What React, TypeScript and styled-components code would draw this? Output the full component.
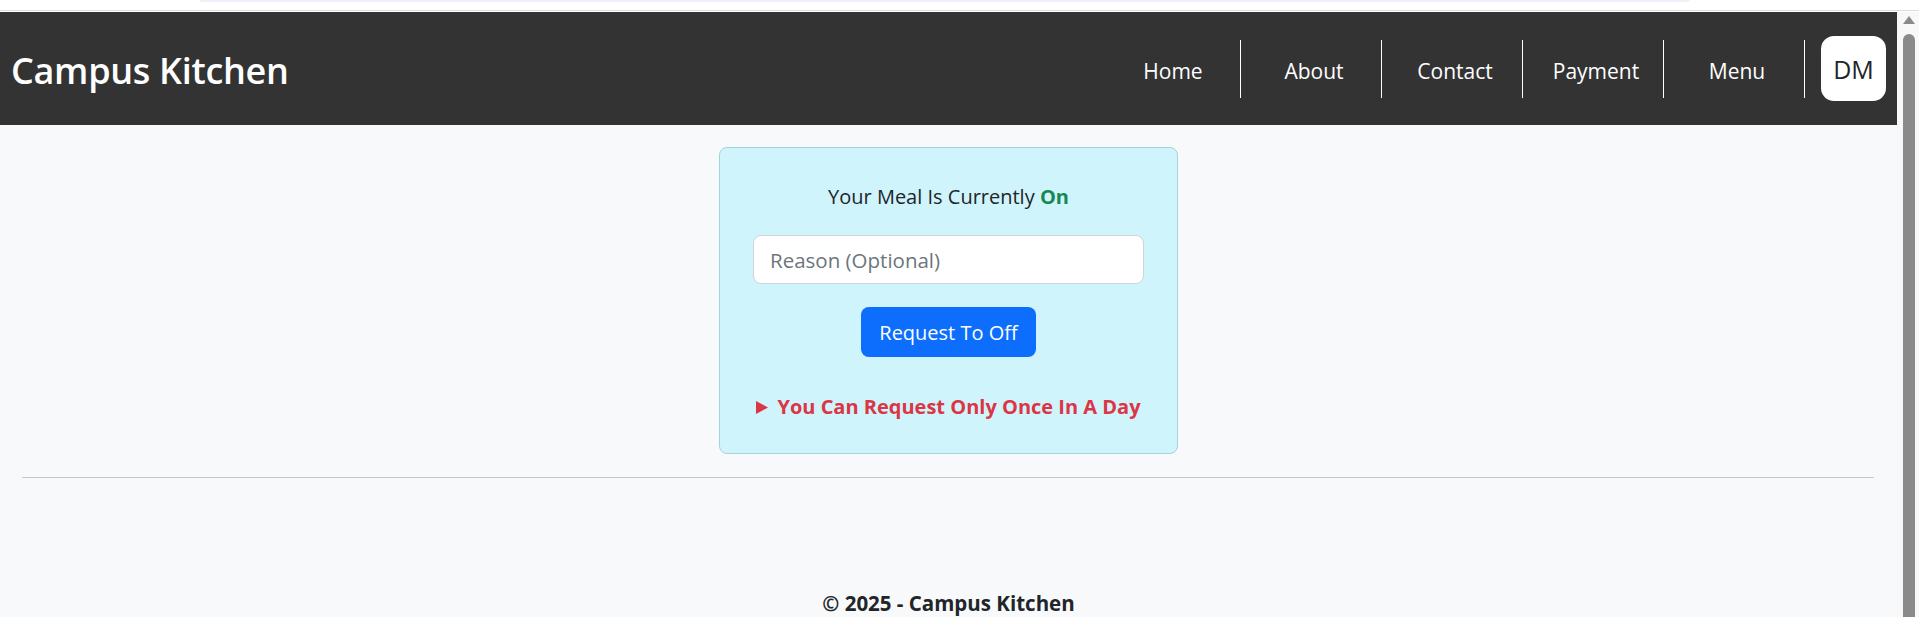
import React, { useState } from "react";
import styled, { createGlobalStyle } from "styled-components";

const GlobalStyle = createGlobalStyle`
  html, body {
    margin: 0;
    padding: 0;
    background: #ffffff;
    overflow: hidden;
  }
  body {
    font-family: "Open Sans", "Noto Sans", Arial, sans-serif;
    color: #212529;
  }
  * {
    box-sizing: border-box;
  }
`;

const Frame = styled.div`
  display: flex;
  flex-direction: column;
  width: 1919px;
  height: 617px;
  overflow: hidden;
`;

const TopStrip = styled.div`
  height: 12px;
  flex-shrink: 0;
  background: #ffffff;
  border-bottom: 1px solid #ffffff;
  display: flex;
  flex-direction: column;
`;

const TabHint = styled.div`
  height: 2px;
  margin-left: 200px;
  width: 1490px;
  background: #edf2fa;
  border-radius: 0 0 4px 4px;
`;

const TopRule = styled.div`
  margin-top: auto;
  height: 1px;
  background: #dcdcdc;
`;

const Viewport = styled.div`
  flex: 1;
  display: flex;
  min-height: 0;
`;

const Page = styled.div`
  flex: 1;
  display: flex;
  flex-direction: column;
  background: #f8f9fa;
  overflow: hidden;
`;

const ScrollTrack = styled.div`
  width: 22px;
  flex-shrink: 0;
  background: #f8f8f8;
  display: flex;
  flex-direction: column;
  align-items: center;
  padding: 4px 2px 0 4px;
  gap: 10px;
`;

const ScrollArrow = styled.div`
  width: 0;
  height: 0;
  border-left: 6px solid transparent;
  border-right: 6px solid transparent;
  border-bottom: 8px solid #8a8a8a;
`;

const ScrollThumb = styled.div`
  flex: 1;
  width: 12px;
  background: #8a8a8a;
  border-radius: 6px 6px 0 0;
`;

const Navbar = styled.nav`
  height: 113px;
  flex-shrink: 0;
  background: #333333;
  display: flex;
  align-items: center;
  justify-content: space-between;
  padding: 0 11px 0 11px;
`;

const Brand = styled.a`
  color: #ffffff;
  font-size: 36px;
  font-weight: 600;
  text-decoration: none;
  letter-spacing: -0.3px;
  padding-top: 3px;
  cursor: pointer;
`;

const NavList = styled.div`
  display: flex;
  align-items: center;
`;

const NavLink = styled.a`
  width: 141px;
  height: 58px;
  display: flex;
  align-items: center;
  justify-content: center;
  padding: 4px 0 0 6px;
  color: #ffffff;
  font-size: 21px;
  text-decoration: none;
  border-right: 1px solid #ffffff;
  cursor: pointer;
`;

const Avatar = styled.div`
  width: 65px;
  height: 65px;
  margin-left: 16px;
  border-radius: 13px;
  background: #ffffff;
  color: #212529;
  font-size: 25px;
  display: flex;
  align-items: center;
  justify-content: center;
`;

const Main = styled.main`
  display: flex;
  flex-direction: column;
  align-items: center;
  padding-top: 22px;
`;

const StatusCard = styled.div`
  width: 459px;
  background: #cff4fc;
  border: 1px solid #a3d3dd;
  border-radius: 8px;
  padding: 34px 33px 31px;
  display: flex;
  flex-direction: column;
  align-items: center;
`;

const StatusText = styled.div`
  font-size: 20px;
  line-height: 30px;
  margin-bottom: 23px;
`;

const StatusValue = styled.b<{ $on: boolean }>`
  font-weight: 700;
  color: ${(p) => (p.$on ? "#198754" : "#dc3545")};
`;

const ReasonInput = styled.input`
  width: 100%;
  height: 49px;
  padding: 0 16px;
  font-family: inherit;
  font-size: 20.5px;
  color: #212529;
  background: #ffffff;
  border: 1px solid #ced4da;
  border-radius: 8px;
  margin-bottom: 23px;
  outline: none;
  &::placeholder {
    color: #6c757d;
  }
`;

const RequestButton = styled.button`
  width: 175px;
  height: 50px;
  font-family: inherit;
  font-size: 20px;
  color: #ffffff;
  background: #0d6efd;
  border: none;
  border-radius: 8px;
  margin-bottom: 35px;
  cursor: pointer;
`;

const Notice = styled.details`
  width: 100%;
`;

const NoticeSummary = styled.summary`
  list-style: none;
  display: flex;
  align-items: center;
  justify-content: center;
  gap: 9px;
  white-space: nowrap;
  font-size: 20px;
  line-height: 30px;
  font-weight: 700;
  color: #dc3545;
  cursor: pointer;
  &::-webkit-details-marker {
    display: none;
  }
  svg {
    flex-shrink: 0;
  }
`;

const Divider = styled.hr`
  align-self: stretch;
  margin: 23px 23px 0 22px;
  border: none;
  border-top: 1px solid #c6c7c8;
`;

const Footer = styled.footer`
  padding-top: 110px;
  text-align: center;
  font-size: 20.5px;
  line-height: 30px;
  font-weight: 700;
  color: #212529;
`;

const App: React.FC = () => {
  const [mealOn] = useState<boolean>(true);
  const [reason, setReason] = useState<string>("");
  const links = ["Home", "About", "Contact", "Payment", "Menu"];

  return (
    <>
      <GlobalStyle />
      <Frame>
        <TopStrip>
          <TabHint />
          <TopRule />
        </TopStrip>
        <Viewport>
          <Page>
            <Navbar>
              <Brand>Campus Kitchen</Brand>
              <NavList>
                {links.map((l) => (
                  <NavLink key={l}>{l}</NavLink>
                ))}
                <Avatar>DM</Avatar>
              </NavList>
            </Navbar>

            <Main>
              <StatusCard>
                <StatusText>
                  Your Meal Is Currently <StatusValue $on={mealOn}>{mealOn ? "On" : "Off"}</StatusValue>
                </StatusText>
                <ReasonInput
                  placeholder="Reason (Optional)"
                  value={reason}
                  onChange={(e) => setReason(e.target.value)}
                />
                <RequestButton>Request To {mealOn ? "Off" : "On"}</RequestButton>
                <Notice>
                  <NoticeSummary>
                    <svg width="12" height="13" viewBox="0 0 12 13">
                      <polygon points="0,0 12,6.5 0,13" fill="#dc3545" />
                    </svg>
                    You Can Request Only Once In A Day
                  </NoticeSummary>
                </Notice>
              </StatusCard>
              <Divider />
            </Main>

            <Footer>© 2025 - Campus Kitchen</Footer>
          </Page>
          <ScrollTrack>
            <ScrollArrow />
            <ScrollThumb />
          </ScrollTrack>
        </Viewport>
      </Frame>
    </>
  );
};

export default App;
